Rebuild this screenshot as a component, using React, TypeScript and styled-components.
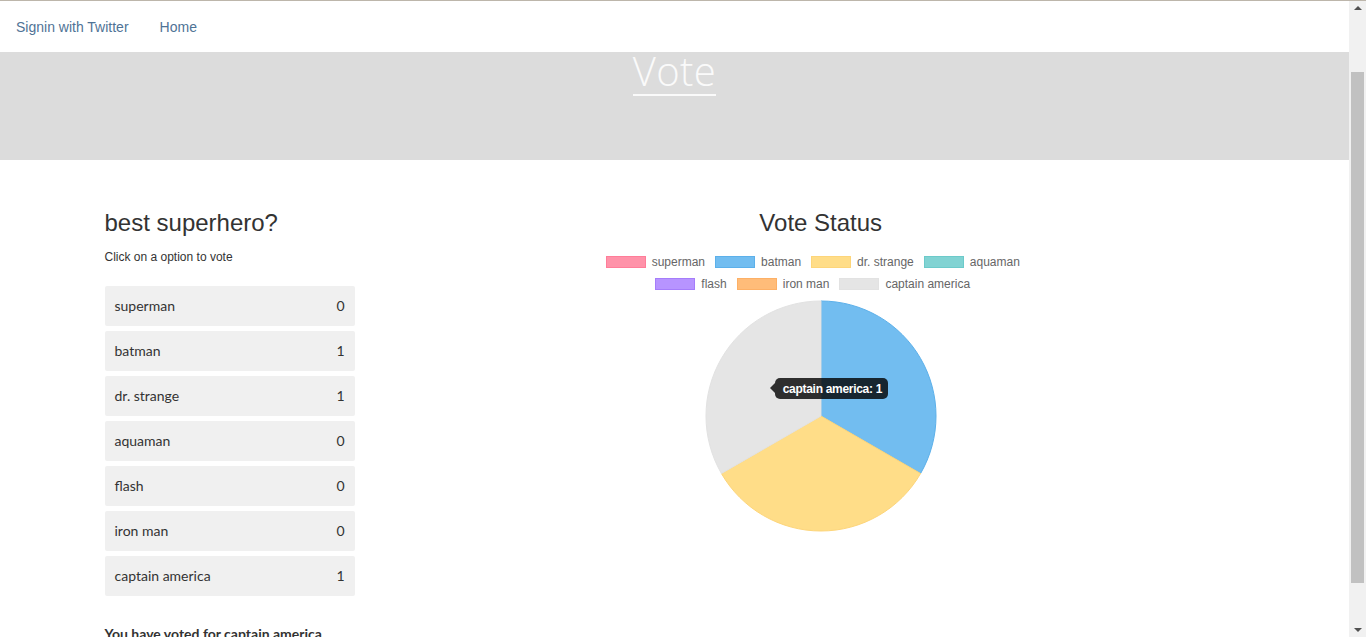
import React, { useLayoutEffect, useRef } from "react";
import styled, { createGlobalStyle } from "styled-components";

const GlobalStyle = createGlobalStyle`
  html, body { margin: 0; padding: 0; overflow: hidden; background: #fff; }
  body { font-family: "Liberation Sans", Arial, sans-serif; color: #333; font-size: 14px; }
  * { box-sizing: border-box; }
`;

const Frame = styled.div`
  height: 100vh;
  display: flex;
`;

const Scroller = styled.div`
  flex: 1;
  min-width: 0;
  height: 100%;
  overflow-y: scroll;
  overflow-x: hidden;
  scrollbar-width: none;
  &::-webkit-scrollbar { display: none; }
`;

const ScrollTrack = styled.div`
  width: 17px;
  height: 100%;
  background: #f1f1f1;
  border-top: 1px solid #bdb6ab;
  display: flex;
  flex-direction: column;
`;

const ScrollButton = styled.div<{ $dir: "up" | "down" }>`
  height: ${(p) => (p.$dir === "up" ? "16px" : "17px")};
  display: flex;
  align-items: center;
  justify-content: center;
  &::after {
    content: "";
    border-left: 4px solid transparent;
    border-right: 4px solid transparent;
    ${(p) =>
      p.$dir === "up"
        ? "border-bottom: 4px solid #505050; margin-top: -2px;"
        : "border-top: 4px solid #505050; margin-top: 2px;"}
  }
`;

const ScrollGap = styled.div<{ $h?: number }>`
  ${(p) => (p.$h ? `height: ${p.$h}px;` : "flex: 1;")}
`;

const ScrollThumb = styled.div`
  height: 511px;
  margin: 0 2px;
  background: #c1c1c1;
`;

const NavBar = styled.nav`
  position: sticky;
  top: 0;
  z-index: 10;
  height: 52px;
  background: #fff;
  border-top: 1px solid #bdb6ab;
  display: flex;
  align-items: center;
  padding-left: 1px;
`;

const NavLink = styled.a`
  font-size: 14px;
  line-height: 20px;
  padding: 0 15px;
  color: #4f7396;
  text-decoration: none;
  cursor: pointer;
  & + & { padding-left: 16px; }
`;

const Jumbotron = styled.header`
  background: #dcdcdc;
  padding: 64px 0 64px;
  display: flex;
  justify-content: center;
`;

const JumboTitle = styled.h1`
  margin: 0;
  font-family: "Open Sans", sans-serif;
  font-weight: 300;
  font-size: 40px;
  line-height: 47px;
  letter-spacing: 0.4px;
  color: #fafafa;
  border-bottom: 2px solid #fafafa;
`;

const Container = styled.main`
  width: 1170px;
  margin: 0 auto;
  padding: 50px 0 38px;
  display: flex;
`;

const LeftCol = styled.section`
  width: 390px;
  padding: 0 15px;
`;

const RightCol = styled.section`
  width: 682.5px;
  padding: 0 15px;
  display: flex;
  flex-direction: column;
  align-items: center;
`;

const Heading = styled.h3`
  margin: 0;
  font-size: 24px;
  line-height: 26px;
  font-weight: 400;
  color: #333;
`;

const Hint = styled.p`
  margin: 13px 0 0;
  font-size: 12px;
  line-height: 17px;
`;

const OptionList = styled.ul`
  list-style: none;
  margin: 20px 0 0;
  padding: 0;
  width: 250px;
  display: flex;
  flex-direction: column;
  gap: 5px;
`;

const OptionItem = styled.li`
  height: 40px;
  background: #f0f0f0;
  border-radius: 2px;
  padding: 0 10px 2px;
  display: flex;
  align-items: center;
  justify-content: space-between;
  font-family: Lato, sans-serif;
  font-size: 14px;
  color: #333;
  cursor: pointer;
`;

const VotedNote = styled.h5`
  margin: 28px 0 0;
  font-family: Lato, sans-serif;
  font-weight: 700;
  font-size: 14px;
  line-height: 20px;
  color: #333;
`;

const Legend = styled.div`
  margin-top: 20px;
  display: flex;
  flex-direction: column;
  gap: 10px;
  align-items: center;
`;

const LegendRow = styled.div`
  display: flex;
  justify-content: center;
  margin-left: -6px;
`;

const LegendItem = styled.div`
  display: flex;
  align-items: center;
  margin-right: 10px;
  height: 12px;
  font-size: 12px;
  color: #666;
  white-space: nowrap;
`;

const LegendBox = styled.span<{ $fill: string; $border: string }>`
  width: 40px;
  height: 12px;
  margin-right: 6px;
  background: ${(p) => p.$fill};
  border: 1px solid ${(p) => p.$border};
`;

const PieWrap = styled.div`
  position: relative;
  margin-top: 10px;
  width: 232px;
  height: 232px;
`;

const Tooltip = styled.div`
  position: absolute;
  left: 70px;
  top: 78px;
  height: 21px;
  padding: 0 6px 0 8px;
  display: flex;
  align-items: center;
  background: rgba(0, 0, 0, 0.8);
  border-radius: 5px;
  color: #fff;
  font-weight: 700;
  font-size: 12px;
  letter-spacing: -0.3px;
  white-space: nowrap;
  &::before {
    content: "";
    position: absolute;
    left: -5px;
    top: 5px;
    border-style: solid;
    border-width: 5px 5px 5px 0;
    border-color: transparent rgba(0, 0, 0, 0.8) transparent transparent;
  }
`;

type Opt = { name: string; votes: number; fill: string; border: string };

const options: Opt[] = [
  { name: "superman", votes: 0, fill: "#ff92a9", border: "#ff7d99" },
  { name: "batman", votes: 1, fill: "#72bdf0", border: "#5cb0ea" },
  { name: "dr. strange", votes: 1, fill: "#ffdd88", border: "#fdd57a" },
  { name: "aquaman", votes: 0, fill: "#81d3d3", border: "#6ccaca" },
  { name: "flash", votes: 0, fill: "#b794ff", border: "#a57dfa" },
  { name: "iron man", votes: 0, fill: "#ffbc79", border: "#fdb066" },
  { name: "captain america", votes: 1, fill: "#e5e5e5", border: "#e2e2e2" },
];

const PieChart: React.FC<{ data: Opt[] }> = ({ data }) => {
  const total = data.reduce((s, d) => s + d.votes, 0);
  const cx = 116;
  const cy = 116;
  const r = 115;
  let angle = 0;
  const slices = data
    .filter((d) => d.votes > 0)
    .map((d) => {
      const start = angle;
      const end = angle + (d.votes / total) * Math.PI * 2;
      angle = end;
      const x1 = cx + r * Math.sin(start);
      const y1 = cy - r * Math.cos(start);
      const x2 = cx + r * Math.sin(end);
      const y2 = cy - r * Math.cos(end);
      const large = end - start > Math.PI ? 1 : 0;
      return (
        <path
          key={d.name}
          d={`M${cx},${cy} L${x1},${y1} A${r},${r} 0 ${large} 1 ${x2},${y2} Z`}
          fill={d.fill}
          stroke={d.border}
          strokeWidth={1}
        />
      );
    });
  return (
    <svg width="232" height="232" viewBox="0 0 232 232">
      {slices}
    </svg>
  );
};

export default function App() {
  const ref = useRef<HTMLDivElement>(null);
  useLayoutEffect(() => {
    if (ref.current) ref.current.scrollTop = 69;
  }, []);
  const row1 = options.slice(0, 4);
  const row2 = options.slice(4);
  return (
    <>
      <GlobalStyle />
      <Frame>
        <Scroller ref={ref}>
          <NavBar>
            <NavLink>Signin with Twitter</NavLink>
            <NavLink>Home</NavLink>
          </NavBar>
          <Jumbotron>
            <JumboTitle>Vote</JumboTitle>
          </Jumbotron>
          <Container>
            <LeftCol>
              <Heading>best superhero?</Heading>
              <Hint>Click on a option to vote</Hint>
              <OptionList>
                {options.map((o) => (
                  <OptionItem key={o.name}>
                    <span>{o.name}</span>
                    <span>{o.votes}</span>
                  </OptionItem>
                ))}
              </OptionList>
              <VotedNote>You have voted for captain america</VotedNote>
            </LeftCol>
            <RightCol>
              <Heading>Vote Status</Heading>
              <Legend>
                {[row1, row2].map((row, i) => (
                  <LegendRow key={i}>
                    {row.map((o) => (
                      <LegendItem key={o.name}>
                        <LegendBox $fill={o.fill} $border={o.border} />
                        {o.name}
                      </LegendItem>
                    ))}
                  </LegendRow>
                ))}
              </Legend>
              <PieWrap>
                <PieChart data={options} />
                <Tooltip>captain america: 1</Tooltip>
              </PieWrap>
            </RightCol>
          </Container>
        </Scroller>
        <ScrollTrack aria-hidden>
          <ScrollButton $dir="up" />
          <ScrollGap $h={55} />
          <ScrollThumb />
          <ScrollGap />
          <ScrollButton $dir="down" />
        </ScrollTrack>
      </Frame>
    </>
  );
}
